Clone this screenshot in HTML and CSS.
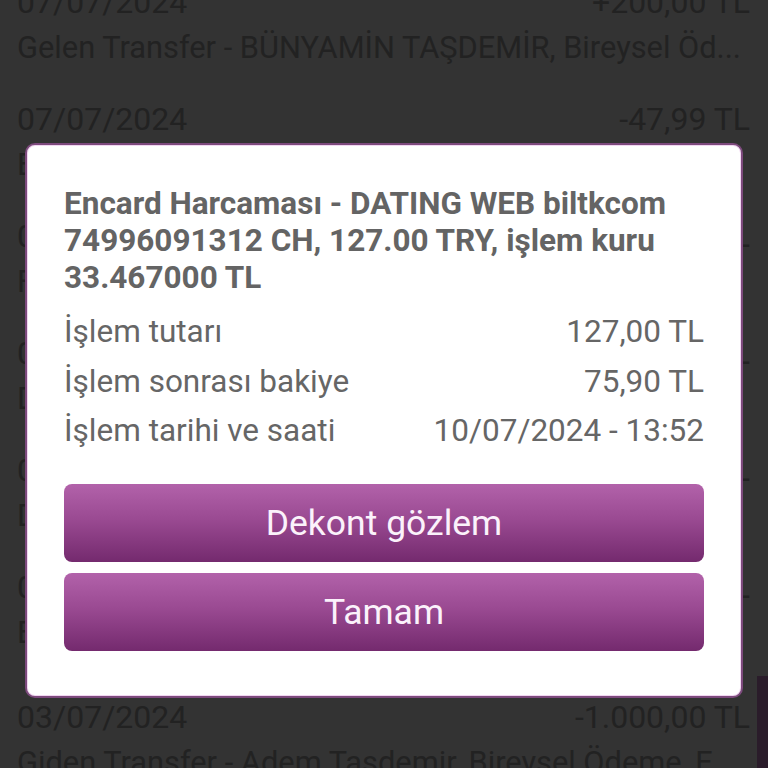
FILE: index.html
```html
<!DOCTYPE html>
<html lang="tr">
<head>
<meta charset="utf-8">
<link rel="stylesheet" href="styles.css">
</head>
<body>
<div class="list">
  <div class="item first">
    <div class="row"><span>07/07/2024</span><span>+200,00 TL</span></div>
    <div class="desc">Gelen Transfer - BÜNYAMİN TAŞDEMİR, Bireysel Öd...</div>
  </div>
  <div class="item">
    <div class="row"><span>07/07/2024</span><span>-47,99 TL</span></div>
    <div class="desc">Encard Harcaması - YEMEKSEPETI ISTANBUL</div>
  </div>
  <div class="item">
    <div class="row"><span>06/07/2024</span><span>-120,00 TL</span></div>
    <div class="desc">Fatura Ödemesi - TURKCELL</div>
  </div>
  <div class="item">
    <div class="row"><span>05/07/2024</span><span>-35,00 TL</span></div>
    <div class="desc">Dijital Harcama - GOOGLE PLAY</div>
  </div>
  <div class="item">
    <div class="row"><span>04/07/2024</span><span>-60,00 TL</span></div>
    <div class="desc">Dijital Harcama - NETFLIX</div>
  </div>
  <div class="item tall">
    <div class="row"><span>04/07/2024</span><span>-250,00 TL</span></div>
    <div class="desc">Encard Harcaması - MIGROS</div>
  </div>
  <div class="item">
    <div class="row"><span>03/07/2024</span><span>-1.000,00 TL</span></div>
    <div class="desc">Giden Transfer - Adem Taşdemir, Bireysel Ödeme, E</div>
  </div>
</div>
<div class="fab"></div>

<div class="dialog">
  <div class="title">Encard Harcaması - DATING WEB biltkcom 74996091312 CH, 127.00 TRY, işlem kuru 33.467000 TL</div>
  <div class="details">
    <div class="drow"><span>İşlem tutarı</span><span>127,00 TL</span></div>
    <div class="drow"><span>İşlem sonrası bakiye</span><span>75,90 TL</span></div>
    <div class="drow"><span>İşlem tarihi ve saati</span><span>10/07/2024 - 13:52</span></div>
  </div>
  <div class="buttons">
    <div class="btn">Dekont gözlem</div>
    <div class="btn">Tamam</div>
  </div>
</div>
</body>
</html>
```
FILE: styles.css
```css
html, body {
  margin: 0;
  padding: 0;
  width: 768px;
  height: 768px;
  overflow: hidden;
  background: #333333;
  font-family: Roboto, "Noto Sans", sans-serif;
}

.list {
  margin-top: -21px;
  padding: 0 18px 0 17px;
  color: #222222;
  font-size: 32px;
}

.item {
  padding-bottom: 25px;
}

.item.tall {
  padding-bottom: 38px;
}

.row {
  display: flex;
  justify-content: space-between;
  line-height: 46px;
  height: 46px;
}

.desc {
  font-size: 30.8px;
  line-height: 46px;
  height: 46px;
  white-space: nowrap;
  overflow: hidden;
}

.fab {
  position: absolute;
  right: 0;
  top: 676px;
  width: 11px;
  height: 92px;
  background: #2a1c2a;
}

.dialog {
  position: absolute;
  left: 25px;
  top: 143px;
  box-sizing: content-box;
  width: 640px;
  height: 551px;
  padding: 0 37px;
  background: #ffffff;
  border: 2px solid #7d4a7d;
  border-radius: 10px;
  box-shadow: inset 0 0 0 1px #f1d6f1;
  display: flex;
  flex-direction: column;
}

.title {
  margin-top: 40px;
  font-size: 31.5px;
  font-weight: 700;
  line-height: 37px;
  color: #646464;
}

.details {
  margin-top: 11px;
  display: flex;
  flex-direction: column;
}

.drow {
  display: flex;
  justify-content: space-between;
  font-size: 31.5px;
  line-height: 49.5px;
  color: #666666;
}

.buttons {
  margin-top: 28px;
  display: flex;
  flex-direction: column;
  gap: 11px;
}

.btn {
  height: 78px;
  border-radius: 8px;
  background: linear-gradient(to bottom, #b262aa 0%, #9a4a92 45%, #742a6e 100%);
  color: #fbf2fb;
  font-size: 35.5px;
  display: flex;
  align-items: center;
  justify-content: center;
}
```
